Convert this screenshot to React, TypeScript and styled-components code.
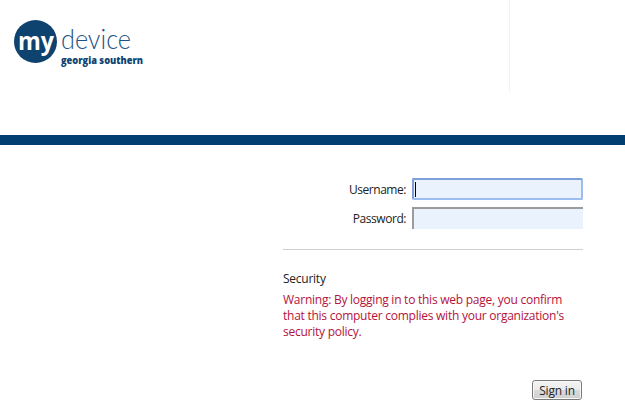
import React from "react";
import styled, { createGlobalStyle } from "styled-components";

const Global = createGlobalStyle`
  html, body { margin: 0; padding: 0; background: #fff; }
  body { font-family: "Open Sans", "Noto Sans", "Liberation Sans", sans-serif; font-size: 12px; color: #222; }
`;

const Page = styled.div`
  width: 625px;
  height: 411px;
  overflow: hidden;
  display: flex;
  flex-direction: column;
`;

const Header = styled.header`
  height: 135px;
  display: flex;
  align-items: flex-start;
  padding-left: 14px;
  box-sizing: border-box;
`;

const LogoMark = styled.svg`
  display: block;
  margin-top: 20px;
  width: 132px;
  height: 56px;
  flex: none;
  overflow: visible;
`;

const HeaderRule = styled.div`
  width: 1px;
  height: 92px;
  margin-left: 363px;
  background: #f3f3f3;
`;

const Band = styled.div`
  height: 10px;
  background: #013f71;
  flex: none;
`;

const Main = styled.main`
  width: 300px;
  margin-left: 283px;
  padding-top: 33px;
  display: flex;
  flex-direction: column;
`;

const Fields = styled.div`
  display: grid;
  grid-template-columns: 123px 171px;
  column-gap: 6px;
  row-gap: 7px;
  align-items: center;
`;

const Label = styled.label`
  text-align: right;
  font-size: 12px;
  letter-spacing: -0.45px;
  color: #222;
`;

const Input = styled.div<{ $focused?: boolean }>`
  height: 22px;
  box-sizing: border-box;
  background: #e9f2fd;
  border-style: solid;
  border-color: ${(p) => (p.$focused ? "#7d9fdc" : "#9c9c9c")};
  border-width: ${(p) => (p.$focused ? "2px" : "2px 0 0 2px")};
  border-radius: ${(p) => (p.$focused ? "2px" : "0")};
  ${(p) => (p.$focused ? "border-bottom-color:#9dbcf0;border-right-color:#9dbcf0;" : "")}
  display: flex;
  align-items: center;
  padding-left: 1px;
`;

const Caret = styled.span`
  display: block;
  width: 1px;
  height: 15px;
  background: #000;
`;

const Divider = styled.hr`
  width: 100%;
  height: 1px;
  margin: 20px 0 0;
  border: 0;
  background: #cfcfcf;
`;

const Heading = styled.div`
  margin-top: 20px;
  font-size: 12px;
  line-height: 17px;
  letter-spacing: -0.25px;
  color: #222;
`;

const Warning = styled.p`
  margin: 5px 0 0;
  font-size: 12px;
  line-height: 16px;
  letter-spacing: -0.25px;
  color: #b5123c;
`;

const Actions = styled.div`
  display: flex;
  justify-content: flex-end;
  margin-top: 40px;
`;

const SignIn = styled.button`
  width: 50px;
  height: 20px;
  padding: 0;
  margin-right: 1px;
  font-family: inherit;
  font-size: 12px;
  letter-spacing: -0.2px;
  color: #222;
  border: 1px solid #7a7a7a;
  border-radius: 3px;
  background: linear-gradient(#f4f4f4, #ebebeb 48%, #dadada 52%, #cfcfcf);
  box-shadow: inset 0 0 0 1px #f8f8f8;
`;

export default function App() {
  return (
    <Page>
      <Global />
      <Header>
        <LogoMark viewBox="0 0 132 56" aria-label="my device georgia southern">
          <circle cx="21.5" cy="21.5" r="21.5" fill="#0e426f" />
          <text x="4" y="30" fontFamily="Open Sans, sans-serif" fontWeight="700" fontSize="25" fill="#fff" textLength="36" lengthAdjust="spacingAndGlyphs">my</text>
          <text x="47" y="29" fontFamily="Lato, Open Sans, sans-serif" fontWeight="300" fontSize="28" fill="#1d5282" textLength="70" lengthAdjust="spacingAndGlyphs">device</text>
          <text x="47" y="44" fontFamily="Open Sans, sans-serif" fontWeight="800" fontSize="10" fill="#0e426f" textLength="82" lengthAdjust="spacingAndGlyphs">georgia southern</text>
        </LogoMark>
        <HeaderRule />
      </Header>
      <Band />
      <Main>
        <Fields>
          <Label>Username:</Label>
          <Input $focused><Caret /></Input>
          <Label>Password:</Label>
          <Input />
        </Fields>
        <Divider />
        <Heading>Security</Heading>
        <Warning>
          Warning: By logging in to this web page, you confirm that this computer complies with your organization's security policy.
        </Warning>
        <Actions>
          <SignIn type="button">Sign in</SignIn>
        </Actions>
      </Main>
    </Page>
  );
}
